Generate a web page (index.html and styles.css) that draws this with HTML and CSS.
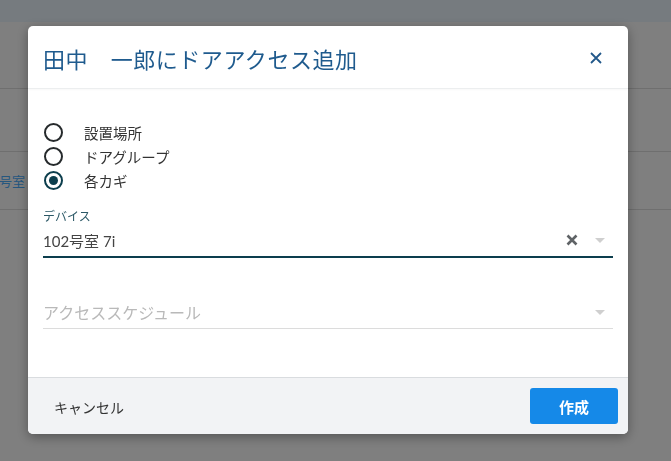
FILE: index.html
```html
<!DOCTYPE html>
<html lang="ja">
<head>
    <meta charset="UTF-8">
    <title>ドアアクセス追加</title>
    <link rel="stylesheet" href="styles.css">
</head>
<body>

<div class="page">
    <div class="topbar"></div>
    <div class="row row-first"></div>
    <div class="row row-second"></div>
    <div class="row row-device"><span class="cell-link">号室 7i</span></div>
</div>

<div class="overlay">
    <div class="modal">
        <div class="modal-header">
            <h2>田中　一郎にドアアクセス追加</h2>
            <button class="close" aria-label="閉じる">
                <svg width="12" height="12" viewBox="0 0 12 12">
                    <path d="M1 1L11 11M11 1L1 11" stroke="#22588a" stroke-width="1.8" fill="none"/>
                </svg>
            </button>
        </div>

        <div class="modal-body">
            <div class="radios">
                <label class="radio"><span class="circle"></span>設置場所</label>
                <label class="radio"><span class="circle"></span>ドアグループ</label>
                <label class="radio checked"><span class="circle"></span>各カギ</label>
            </div>

            <div class="field active">
                <div class="field-label">デバイス</div>
                <div class="field-input">
                    <span class="value">102号室 7i</span>
                    <span class="clear">
                        <svg width="12" height="12" viewBox="0 0 12 12">
                            <path d="M1.5 1.5L10.5 10.5M10.5 1.5L1.5 10.5" stroke="#5f6366" stroke-width="2.6" fill="none"/>
                        </svg>
                    </span>
                    <span class="caret"></span>
                </div>
            </div>

            <div class="field schedule">
                <div class="field-input">
                    <span class="placeholder">アクセススケジュール</span>
                    <span class="caret"></span>
                </div>
            </div>
        </div>

        <div class="modal-footer">
            <button class="cancel">キャンセル</button>
            <button class="create">作成</button>
        </div>
    </div>
</div>

</body>
</html>
```

FILE: styles.css
```css
body {
    margin: 0;
    padding: 0;
    font-family: Lato, "Noto Sans CJK JP", sans-serif;
    background-color: #fefefe;
    overflow: hidden;
}
.page {
    height: 461px;
}
.topbar {
    height: 22px;
    background-color: #ecf6fe;
}
.row {
    border-bottom: 1px solid #dedede;
}
.row-first {
    height: 66px;
}
.row-second {
    height: 62px;
}
.row-device {
    height: 57px;
    display: flex;
    align-items: center;
}
.cell-link {
    color: #4aaeff;
    font-size: 13px;
    margin-left: -1px;
}

.overlay {
    position: fixed;
    top: 0;
    left: 0;
    right: 0;
    bottom: 0;
    background-color: rgba(0, 0, 0, 0.5);
    padding: 26px 0 0 28px;
}
.modal {
    width: 600px;
    height: 408px;
    background-color: white;
    border-radius: 5px;
    box-shadow: 0 3px 12px rgba(0, 0, 0, 0.35);
    display: flex;
    flex-direction: column;
    overflow: hidden;
}

.modal-header {
    height: 63px;
    box-sizing: border-box;
    border-bottom: 1px solid #eceeef;
    display: flex;
    align-items: center;
    justify-content: space-between;
    padding: 1px 26px 0 15px;
    box-shadow: 0 1px 2px rgba(0, 0, 0, 0.03);
}
.modal-header h2 {
    margin: 0;
    font-size: 22px;
    font-weight: normal;
    color: #1f5b8e;
    letter-spacing: 0.55px;
}
.close {
    background: none;
    border: none;
    padding: 0;
    width: 12px;
    height: 12px;
    display: flex;
    cursor: pointer;
}

.modal-body {
    flex: 1;
    padding: 31px 15px 0 15px;
}
.radios {
    display: flex;
    flex-direction: column;
}
.radio {
    height: 24px;
    display: flex;
    align-items: center;
    font-size: 14.5px;
    color: #333;
}
.circle {
    width: 19px;
    height: 19px;
    box-sizing: border-box;
    border: 2px solid #262a2c;
    border-radius: 50%;
    margin: 0 21px 0 1px;
    display: flex;
    align-items: center;
    justify-content: center;
}
.radio.checked .circle {
    border-color: #0c3e4d;
    border-width: 2.5px;
}
.radio.checked .circle::after {
    content: "";
    width: 9px;
    height: 9px;
    border-radius: 50%;
    background-color: #0c3e4d;
}

.field {
    margin-top: 17px;
}
.field-label {
    font-size: 12px;
    line-height: 16px;
    color: #2b5866;
}
.field-input {
    display: flex;
    align-items: center;
    height: 24px;
    padding: 3px 8px 4px 0;
    border-bottom: 1px solid #dcdcdc;
}
.field.active .field-input {
    border-bottom: 2px solid #0c3e4d;
}
.value {
    flex: 1;
    font-size: 15px;
    color: #444;
}
.placeholder {
    flex: 1;
    font-size: 16px;
    color: #b9b9b9;
}
.clear {
    display: flex;
    margin-right: 17px;
}
.caret {
    width: 0;
    height: 0;
    border-left: 5px solid transparent;
    border-right: 5px solid transparent;
    border-top: 5px solid #cfcfcf;
}
.field.schedule {
    margin-top: 42px;
}
.field.schedule .field-input {
    padding-top: 0;
    padding-bottom: 4px;
}

.modal-footer {
    height: 57px;
    box-sizing: border-box;
    border-top: 1px solid #d9dcdf;
    background-color: #f2f3f5;
    display: flex;
    align-items: center;
    justify-content: space-between;
    padding: 0 10px 0 15px;
}
.cancel {
    background: none;
    border: none;
    font-family: inherit;
    font-size: 14px;
    color: #333;
    padding: 8px 11px;
    margin-top: 2px;
    cursor: pointer;
}
.create {
    width: 88px;
    height: 36px;
    border: none;
    border-radius: 3px;
    background-color: #1589e8;
    color: white;
    font-family: inherit;
    font-size: 15px;
    font-weight: bold;
    cursor: pointer;
}
```
